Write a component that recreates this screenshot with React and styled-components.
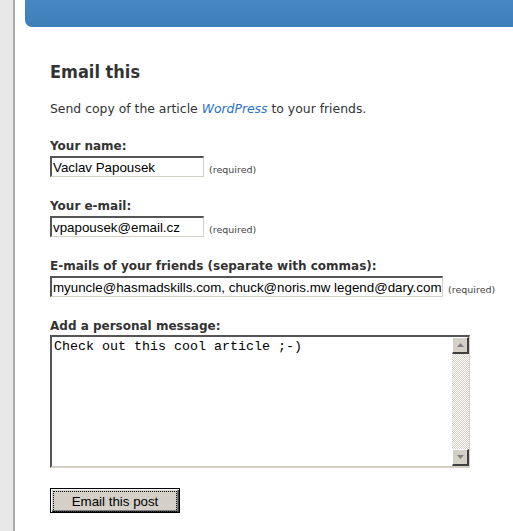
import styled, { createGlobalStyle } from "styled-components";

const GlobalStyle = createGlobalStyle`
  html, body {
    margin: 0;
    padding: 0;
    background: #fff;
  }
  body {
    font-family: "DejaVu Sans", Verdana, sans-serif;
    color: #333;
  }
`;

const fields = [
  { id: "name", label: "Your name:", value: "Vaclav Papousek", width: 154 },
  { id: "email", label: "Your e-mail:", value: "vpapousek@email.cz", width: 154 },
  {
    id: "friends",
    label: "E-mails of your friends (separate with commas):",
    value: "myuncle@hasmadskills.com, chuck@noris.mw legend@dary.com",
    width: 393,
  },
];

const TriangleUp = () => (
  <svg width="7" height="4" viewBox="0 0 7 4">
    <path d="M3.5 0 L7 4 L0 4 Z" fill="#808080" />
  </svg>
);

const TriangleDown = () => (
  <svg width="7" height="4" viewBox="0 0 7 4">
    <path d="M0 0 L7 0 L3.5 4 Z" fill="#808080" />
  </svg>
);

export default function App() {
  return (
    <>
      <GlobalStyle />
      <Page>
        <SideStrip />
        <Main>
          <HeaderBar />
          <Content>
            <Title>Email this</Title>
            <Intro>
              Send copy of the article <ArticleLink href="#">WordPress</ArticleLink> to your
              friends.
            </Intro>
            <form onSubmit={(e) => e.preventDefault()}>
              {fields.map((f) => (
                <FieldGroup key={f.id}>
                  <Label htmlFor={f.id}>{f.label}</Label>
                  <InputRow>
                    <TextInput id={f.id} defaultValue={f.value} $width={f.width} />
                    <Required>(required)</Required>
                  </InputRow>
                </FieldGroup>
              ))}
              <FieldGroup>
                <Label htmlFor="message">Add a personal message:</Label>
                <TextBox>
                  <MessageArea id="message" defaultValue="Check out this cool article ;-)" />
                  <Scrollbar>
                    <ScrollButton type="button" tabIndex={-1}>
                      <TriangleUp />
                    </ScrollButton>
                    <ScrollTrack />
                    <ScrollButton type="button" tabIndex={-1}>
                      <TriangleDown />
                    </ScrollButton>
                  </Scrollbar>
                </TextBox>
              </FieldGroup>
              <SubmitButton type="submit">
                <FocusRing>Email this post</FocusRing>
              </SubmitButton>
            </form>
          </Content>
        </Main>
      </Page>
    </>
  );
}

const Page = styled.div`
  display: flex;
  min-height: 531px;
`;

const SideStrip = styled.div`
  width: 13px;
  flex: none;
  background: #e8e8e8;
  border-right: 2px solid #a8a8a8;
`;

const Main = styled.div`
  flex: 1;
  padding-left: 10px;
`;

const HeaderBar = styled.div`
  height: 27px;
  background: linear-gradient(#4888c2, #3f7fb9);
  border-bottom-left-radius: 7px;
`;

const Content = styled.div`
  padding: 35px 0 0 25px;
`;

const Title = styled.h2`
  margin: 0;
  font-family: "DejaVu Sans Condensed", "DejaVu Sans", sans-serif;
  font-size: 18px;
  font-weight: bold;
  line-height: 20px;
  color: #333;
`;

const Intro = styled.p`
  margin: 19px 0 21px;
  font-size: 12.4px;
  line-height: 16px;
`;

const ArticleLink = styled.a`
  color: #2870c8;
  font-style: italic;
  text-decoration: none;
`;

const FieldGroup = styled.div`
  margin-bottom: 21px;
`;

const Label = styled.label`
  display: block;
  margin-bottom: 2px;
  font-size: 12px;
  font-weight: bold;
  line-height: 16px;
  color: #333;
`;

const InputRow = styled.div`
  display: flex;
  align-items: flex-end;
  gap: 5px;
`;

const TextInput = styled.input`
  box-sizing: border-box;
  width: ${(p) => p.$width}px;
  height: 21px;
  margin: 0;
  padding: 1px 1px 0;
  font-family: "Liberation Sans", Arial, sans-serif;
  font-size: 13.33px;
  color: #000;
  background: #fff;
  border-style: solid;
  border-width: 2px 1px 1px 2px;
  border-color: #555 #d4d0c8 #d4d0c8 #555;
  outline: none;
`;

const Required = styled.span`
  font-size: 9.5px;
  line-height: 12px;
  color: #444;
  margin-bottom: 1px;
`;

const TextBox = styled.div`
  box-sizing: border-box;
  display: flex;
  width: 420px;
  height: 133px;
  margin-top: -1px;
  border-style: solid;
  border-width: 2px 1px 2px 2px;
  border-color: #555 #d4d0c8 #d4d0c8 #555;
  background: #fff;
`;

const MessageArea = styled.textarea`
  flex: 1;
  margin: 0;
  padding: 2px 2px;
  border: none;
  resize: none;
  outline: none;
  overflow: hidden;
  font-family: "Liberation Mono", "Courier New", monospace;
  font-size: 13.33px;
  line-height: 15px;
  color: #000;
`;

const Scrollbar = styled.div`
  display: flex;
  flex-direction: column;
  width: 17px;
  flex: none;
`;

const ScrollButton = styled.button`
  box-sizing: border-box;
  display: flex;
  align-items: center;
  justify-content: center;
  width: 17px;
  height: 17px;
  padding: 0;
  margin: 0;
  background: #d4d0c8;
  border-style: solid;
  border-width: 1px 2px 2px 1px;
  border-color: #fff #404040 #404040 #fff;
`;

const ScrollTrack = styled.div`
  flex: 1;
  background: repeating-conic-gradient(#d4d0c8 0 25%, #fff 0 50%) 0 0 / 2px 2px;
`;

const SubmitButton = styled.button`
  box-sizing: border-box;
  width: 130px;
  height: 25px;
  margin-top: -1px;
  padding: 2px;
  background: #d4d0c8;
  border: 1px solid #000;
  box-shadow: inset 1px 1px #fff, inset -1px -1px #404040, inset -2px -2px #808080;
  font-family: "Liberation Sans", Arial, sans-serif;
  font-size: 13.33px;
  color: #000;
  cursor: pointer;
`;

const FocusRing = styled.span`
  display: flex;
  align-items: center;
  justify-content: center;
  height: 100%;
  border: 1px dotted #000;
`;
